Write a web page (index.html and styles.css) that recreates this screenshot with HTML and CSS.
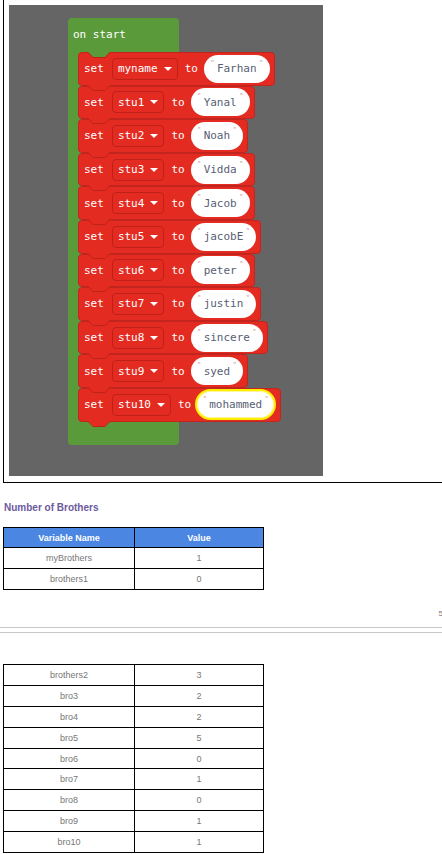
FILE: index.html
```html
<!DOCTYPE html>
<html>
<head>
<meta charset="utf-8">
<link rel="stylesheet" href="styles.css">
</head>
<body>
<div class="frame">
  <div class="canvas">
    <div class="event">
      <div class="hat">on start</div>
      <div class="stack">
        <div class="blk">
          <svg class="notch" viewBox="0 0 24 6" width="24" height="6"><path d="M0,0 L5,5 L17,5 L22,0 Z" fill="#5b9a3b"/><path d="M0,0.5 L5,5.5 L17,5.5 L22,0.5" fill="none" stroke="#bd231b" stroke-width="1"/></svg>
          <span class="kw">set</span><span class="dd">myname<i class="caret"></i></span><span class="kw to">to</span><span class="str"><b class="qt">"</b>Farhan<b class="qt">"</b></span>
          <svg class="tab" viewBox="0 0 24 6" width="24" height="6"><path d="M0,0 L5,5 L17,5 L22,0 Z" fill="#e42b21"/><path d="M0,0.5 L5,5.5 L17,5.5 L22,0.5" fill="none" stroke="#bd231b" stroke-width="1"/></svg>
        </div>
        <div class="blk">
          <span class="kw">set</span><span class="dd">stu1<i class="caret"></i></span><span class="kw to">to</span><span class="str"><b class="qt">"</b>Yanal<b class="qt">"</b></span>
          <svg class="tab" viewBox="0 0 24 6" width="24" height="6"><path d="M0,0 L5,5 L17,5 L22,0 Z" fill="#e42b21"/><path d="M0,0.5 L5,5.5 L17,5.5 L22,0.5" fill="none" stroke="#bd231b" stroke-width="1"/></svg>
        </div>
        <div class="blk">
          <span class="kw">set</span><span class="dd">stu2<i class="caret"></i></span><span class="kw to">to</span><span class="str"><b class="qt">"</b>Noah<b class="qt">"</b></span>
          <svg class="tab" viewBox="0 0 24 6" width="24" height="6"><path d="M0,0 L5,5 L17,5 L22,0 Z" fill="#e42b21"/><path d="M0,0.5 L5,5.5 L17,5.5 L22,0.5" fill="none" stroke="#bd231b" stroke-width="1"/></svg>
        </div>
        <div class="blk">
          <span class="kw">set</span><span class="dd">stu3<i class="caret"></i></span><span class="kw to">to</span><span class="str"><b class="qt">"</b>Vidda<b class="qt">"</b></span>
          <svg class="tab" viewBox="0 0 24 6" width="24" height="6"><path d="M0,0 L5,5 L17,5 L22,0 Z" fill="#e42b21"/><path d="M0,0.5 L5,5.5 L17,5.5 L22,0.5" fill="none" stroke="#bd231b" stroke-width="1"/></svg>
        </div>
        <div class="blk">
          <span class="kw">set</span><span class="dd">stu4<i class="caret"></i></span><span class="kw to">to</span><span class="str"><b class="qt">"</b>Jacob<b class="qt">"</b></span>
          <svg class="tab" viewBox="0 0 24 6" width="24" height="6"><path d="M0,0 L5,5 L17,5 L22,0 Z" fill="#e42b21"/><path d="M0,0.5 L5,5.5 L17,5.5 L22,0.5" fill="none" stroke="#bd231b" stroke-width="1"/></svg>
        </div>
        <div class="blk">
          <span class="kw">set</span><span class="dd">stu5<i class="caret"></i></span><span class="kw to">to</span><span class="str"><b class="qt">"</b>jacobE<b class="qt">"</b></span>
          <svg class="tab" viewBox="0 0 24 6" width="24" height="6"><path d="M0,0 L5,5 L17,5 L22,0 Z" fill="#e42b21"/><path d="M0,0.5 L5,5.5 L17,5.5 L22,0.5" fill="none" stroke="#bd231b" stroke-width="1"/></svg>
        </div>
        <div class="blk">
          <span class="kw">set</span><span class="dd">stu6<i class="caret"></i></span><span class="kw to">to</span><span class="str"><b class="qt">"</b>peter<b class="qt">"</b></span>
          <svg class="tab" viewBox="0 0 24 6" width="24" height="6"><path d="M0,0 L5,5 L17,5 L22,0 Z" fill="#e42b21"/><path d="M0,0.5 L5,5.5 L17,5.5 L22,0.5" fill="none" stroke="#bd231b" stroke-width="1"/></svg>
        </div>
        <div class="blk">
          <span class="kw">set</span><span class="dd">stu7<i class="caret"></i></span><span class="kw to">to</span><span class="str"><b class="qt">"</b>justin<b class="qt">"</b></span>
          <svg class="tab" viewBox="0 0 24 6" width="24" height="6"><path d="M0,0 L5,5 L17,5 L22,0 Z" fill="#e42b21"/><path d="M0,0.5 L5,5.5 L17,5.5 L22,0.5" fill="none" stroke="#bd231b" stroke-width="1"/></svg>
        </div>
        <div class="blk">
          <span class="kw">set</span><span class="dd">stu8<i class="caret"></i></span><span class="kw to">to</span><span class="str"><b class="qt">"</b>sincere<b class="qt">"</b></span>
          <svg class="tab" viewBox="0 0 24 6" width="24" height="6"><path d="M0,0 L5,5 L17,5 L22,0 Z" fill="#e42b21"/><path d="M0,0.5 L5,5.5 L17,5.5 L22,0.5" fill="none" stroke="#bd231b" stroke-width="1"/></svg>
        </div>
        <div class="blk">
          <span class="kw">set</span><span class="dd">stu9<i class="caret"></i></span><span class="kw to">to</span><span class="str"><b class="qt">"</b>syed<b class="qt">"</b></span>
          <svg class="tab" viewBox="0 0 24 6" width="24" height="6"><path d="M0,0 L5,5 L17,5 L22,0 Z" fill="#e42b21"/><path d="M0,0.5 L5,5.5 L17,5.5 L22,0.5" fill="none" stroke="#bd231b" stroke-width="1"/></svg>
        </div>
        <div class="blk">
          <span class="kw">set</span><span class="dd">stu10<i class="caret"></i></span><span class="kw to">to</span><span class="str sel"><b class="qt">"</b>mohammed<b class="qt">"</b></span>
          <svg class="tab" viewBox="0 0 24 6" width="24" height="6"><path d="M0,0 L5,5 L17,5 L22,0 Z" fill="#e42b21"/><path d="M0,0.5 L5,5.5 L17,5.5 L22,0.5" fill="none" stroke="#bd231b" stroke-width="1"/></svg>
        </div>
      </div>
      <div class="foot"></div>
    </div>
  </div>
</div>

<h3 class="title">Number of Brothers</h3>

<table class="data">
  <tr><th>Variable Name</th><th>Value</th></tr>
  <tr><td>myBrothers</td><td>1</td></tr>
  <tr><td>brothers1</td><td>0</td></tr>
</table>

<div class="pageno">5</div>
<div class="pagebreak"></div>

<table class="data second">
  <tr><td>brothers2</td><td>3</td></tr>
  <tr><td>bro3</td><td>2</td></tr>
  <tr><td>bro4</td><td>2</td></tr>
  <tr><td>bro5</td><td>5</td></tr>
  <tr><td>bro6</td><td>0</td></tr>
  <tr><td>bro7</td><td>1</td></tr>
  <tr><td>bro8</td><td>0</td></tr>
  <tr><td>bro9</td><td>1</td></tr>
  <tr><td>bro10</td><td>1</td></tr>
</table>
</body>
</html>
```

FILE: styles.css
```css
html, body {
  margin: 0;
  padding: 0;
  overflow: hidden;
  background: #fff;
}
body {
  font-family: "Liberation Sans", Arial, sans-serif;
}

.frame {
  margin-left: 3px;
  border-left: 1px solid #000;
  border-bottom: 1px solid #000;
  padding: 5px 0 6px 5px;
}
.canvas {
  width: 314px;
  height: 471px;
  background: #656565;
  padding: 13px 0 0 59px;
  box-sizing: border-box;
}

.event {
  width: 111px;
  background: #5b9a3b;
  border-radius: 4px;
  font-family: "DejaVu Sans Mono", monospace;
  font-size: 11px;
}
.hat {
  height: 34px;
  line-height: 34px;
  padding-left: 5px;
  color: #fff;
}
.stack {
  margin-left: 10px;
  display: flex;
  flex-direction: column;
  align-items: flex-start;
}
.foot {
  height: 23px;
}

.blk {
  position: relative;
  box-sizing: border-box;
  height: 33.6px;
  display: flex;
  align-items: center;
  padding: 0 4px 0 5px;
  background: #e42b21;
  border: 1px solid #c2251d;
  border-radius: 4px;
  white-space: nowrap;
}
.notch {
  position: absolute;
  left: 9px;
  top: -1px;
  z-index: 2;
}
.tab {
  position: absolute;
  left: 9px;
  top: 100%;
  z-index: 2;
}
.kw {
  color: #fff;
}
.kw.to {
  margin: 0 6px 0 7px;
}
.dd {
  display: flex;
  align-items: center;
  height: 22px;
  box-sizing: border-box;
  margin-left: 8px;
  padding: 0 5px;
  border: 1px solid #bf2119;
  border-radius: 4px;
  color: #fff;
}
.caret {
  width: 0;
  height: 0;
  margin-left: 6px;
  border-left: 4px solid transparent;
  border-right: 4px solid transparent;
  border-top: 4px solid #fff;
}
.str {
  display: flex;
  align-items: center;
  height: 28px;
  box-sizing: border-box;
  padding: 0 4px;
  background: #fff;
  border-radius: 14px;
  color: #575e75;
}
.str.sel {
  height: 31px;
  border-radius: 16px;
  border: 2px solid #ffee00;
  box-shadow: inset 0 0 0 1px #fff59a;
  padding: 0 3px;
  margin-left: -2px;
}
.qt {
  font-family: "DejaVu Sans", sans-serif;
  font-weight: normal;
  font-size: 7px;
  line-height: 7px;
  color: #c98f8b;
  align-self: flex-start;
  margin-top: 5px;
  width: 9px;
  text-align: center;
}

.title {
  margin: 18px 0 0 4px;
  font-size: 10px;
  line-height: 13px;
  font-weight: bold;
  color: #6c5a9e;
}

.data {
  margin: 13px 0 0 3px;
  border-collapse: collapse;
  width: 261px;
  font-size: 9px;
  table-layout: fixed;
}
.data th, .data td {
  border: 1px solid #000;
  text-align: center;
  padding: 0;
}
.data th:first-child, .data td:first-child {
  width: 130px;
}
.data th {
  height: 19px;
  background: #4a86e2;
  color: #fff;
  font-weight: bold;
}
.data td {
  height: 20px;
  color: #777;
}
.data.second {
  margin-top: 31px;
}
.data.second td {
  height: 19.9px;
}

.pageno {
  margin: 19px -1px 0 0;
  text-align: right;
  font-size: 8px;
  line-height: 10px;
  color: #777;
}
.pagebreak {
  margin-top: 8px;
  height: 4px;
  border-top: 1px solid #c8c8c8;
  border-bottom: 1px solid #c8c8c8;
}
```
